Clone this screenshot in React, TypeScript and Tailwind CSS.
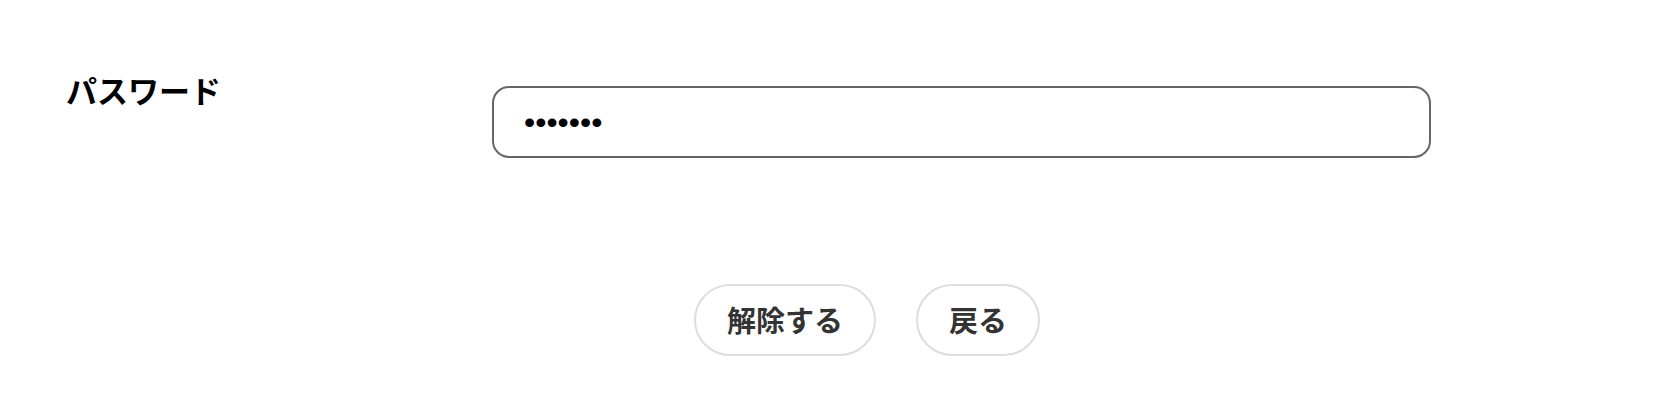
export default function App() {
  return (
    <main className="min-h-[410px] w-full bg-white pl-[66px] pt-[74px] font-['Noto_Sans_CJK_JP',sans-serif]">
      {/* password row */}
      <div className="flex items-start">
        <label className="w-[426px] shrink-0 text-[31px] font-bold leading-[31px] text-black">
          パスワード
        </label>
        <input
          type="password"
          defaultValue="1234567"
          className="mt-[12px] h-[72px] w-[939px] rounded-[17px] border-2 border-[#666] bg-white px-[30px] font-['Liberation_Sans',sans-serif] text-[32px] text-black outline-none"
        />
      </div>

      {/* actions */}
      <div className="mt-[126px] flex justify-center gap-[40px]">
        <button className="flex h-[72px] items-center rounded-full border-2 border-[#ddd] bg-white px-[31px] text-[29px] font-bold text-[#333]">
          解除する
        </button>
        <button className="flex h-[72px] items-center rounded-full border-2 border-[#ddd] bg-white px-[31px] text-[29px] font-bold text-[#333]">
          戻る
        </button>
      </div>
    </main>
  );
}
